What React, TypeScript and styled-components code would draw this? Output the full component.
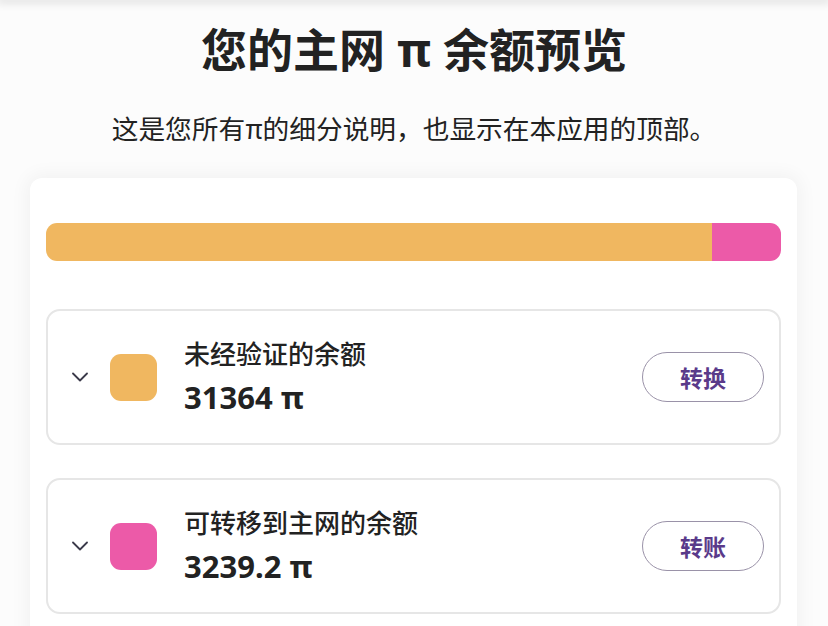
import React from "react";
import styled, { createGlobalStyle } from "styled-components";

const GlobalStyle = createGlobalStyle`
  html, body { margin: 0; padding: 0; background: #fcfcfc; }
  body { font-family: "Noto Sans", "Noto Sans CJK SC", sans-serif; color: #222222; }
  * { box-sizing: border-box; }
`;

const Page = styled.div`
  min-height: 100vh;
  background: #fcfcfc;
  overflow: hidden;
`;

const TopShade = styled.div`
  height: 0;
  box-shadow: 0 0 9px 3px rgba(0, 0, 0, 0.13);
`;

const Title = styled.h1`
  margin: 21px 0 0;
  font-family: "Noto Sans", "Noto Sans CJK SC", sans-serif;
  font-size: 46px;
  line-height: 56px;
  font-weight: 700;
  text-align: center;
  color: #222222;
`;

const Subtitle = styled.p`
  margin: 33px 0 32px;
  font-family: "Noto Sans CJK SC", sans-serif;
  font-size: 26.7px;
  line-height: 36px;
  font-weight: 400;
  text-align: center;
  color: #222222;
`;

const Card = styled.section`
  margin: 0 31px 0 30px;
  padding: 45px 16px 40px;
  background: #ffffff;
  border-radius: 12px;
  box-shadow: 0 0 18px 4px rgba(0, 0, 0, 0.045);
`;

const Bar = styled.div`
  display: flex;
  height: 38px;
  border-radius: 11px;
  overflow: hidden;
`;

const Segment = styled.div<{ $color: string }>`
  height: 100%;
  background: ${(p) => p.$color};
`;

const List = styled.div`
  display: flex;
  flex-direction: column;
  gap: 33px;
  margin-top: 48px;
`;

const Item = styled.div`
  display: flex;
  align-items: center;
  height: 136px;
  padding: 0 15px 0 24px;
  border: 2px solid #e6e6e6;
  border-radius: 14px;
  background: #ffffff;
`;

const Chevron = styled.svg`
  flex: none;
  width: 16px;
  height: 10px;
  margin-right: 22px;
`;

const Swatch = styled.div<{ $color: string }>`
  flex: none;
  width: 47px;
  height: 47px;
  border-radius: 11px;
  background: ${(p) => p.$color};
  margin-right: 27px;
`;

const Info = styled.div`
  display: flex;
  flex-direction: column;
  gap: 8px;
`;

const Label = styled.div`
  font-family: "Noto Sans CJK SC", sans-serif;
  font-size: 26px;
  line-height: 32px;
  font-weight: 500;
  color: #222222;
`;

const Amount = styled.div`
  font-family: "Noto Sans", "Noto Sans CJK SC", sans-serif;
  font-size: 31px;
  line-height: 40px;
  font-weight: 700;
  color: #222222;
`;

const ActionButton = styled.button`
  margin-left: auto;
  flex: none;
  width: 122px;
  height: 50px;
  border-radius: 25px;
  border: 1.5px solid #9a92a8;
  background: #ffffff;
  color: #5a3a8a;
  font-family: "Noto Sans CJK SC", sans-serif;
  font-size: 23px;
  font-weight: 700;
  cursor: pointer;
`;

const balances = [
  { label: "未经验证的余额", amount: 31364, display: "31364", color: "#f0b760", action: "转换" },
  { label: "可转移到主网的余额", amount: 3239.2, display: "3239.2", color: "#ec5aa8", action: "转账" },
];

export default function App() {
  const total = balances.reduce((s, b) => s + b.amount, 0);
  return (
    <Page>
      <GlobalStyle />
      <TopShade />
      <Title>您的主网 π 余额预览</Title>
      <Subtitle>这是您所有π的细分说明，也显示在本应用的顶部。</Subtitle>
      <Card>
        <Bar>
          {balances.map((b) => (
            <Segment key={b.label} $color={b.color} style={{ width: `${(b.amount / total) * 100}%` }} />
          ))}
        </Bar>
        <List>
          {balances.map((b) => (
            <Item key={b.label}>
              <Chevron viewBox="0 0 16 10" fill="none">
                <path d="M1 1.5 L8 8.5 L15 1.5" stroke="#3b3a4a" strokeWidth="1.8" strokeLinecap="round" strokeLinejoin="round" />
              </Chevron>
              <Swatch $color={b.color} />
              <Info>
                <Label>{b.label}</Label>
                <Amount>{b.display} π</Amount>
              </Info>
              <ActionButton>{b.action}</ActionButton>
            </Item>
          ))}
        </List>
      </Card>
    </Page>
  );
}
